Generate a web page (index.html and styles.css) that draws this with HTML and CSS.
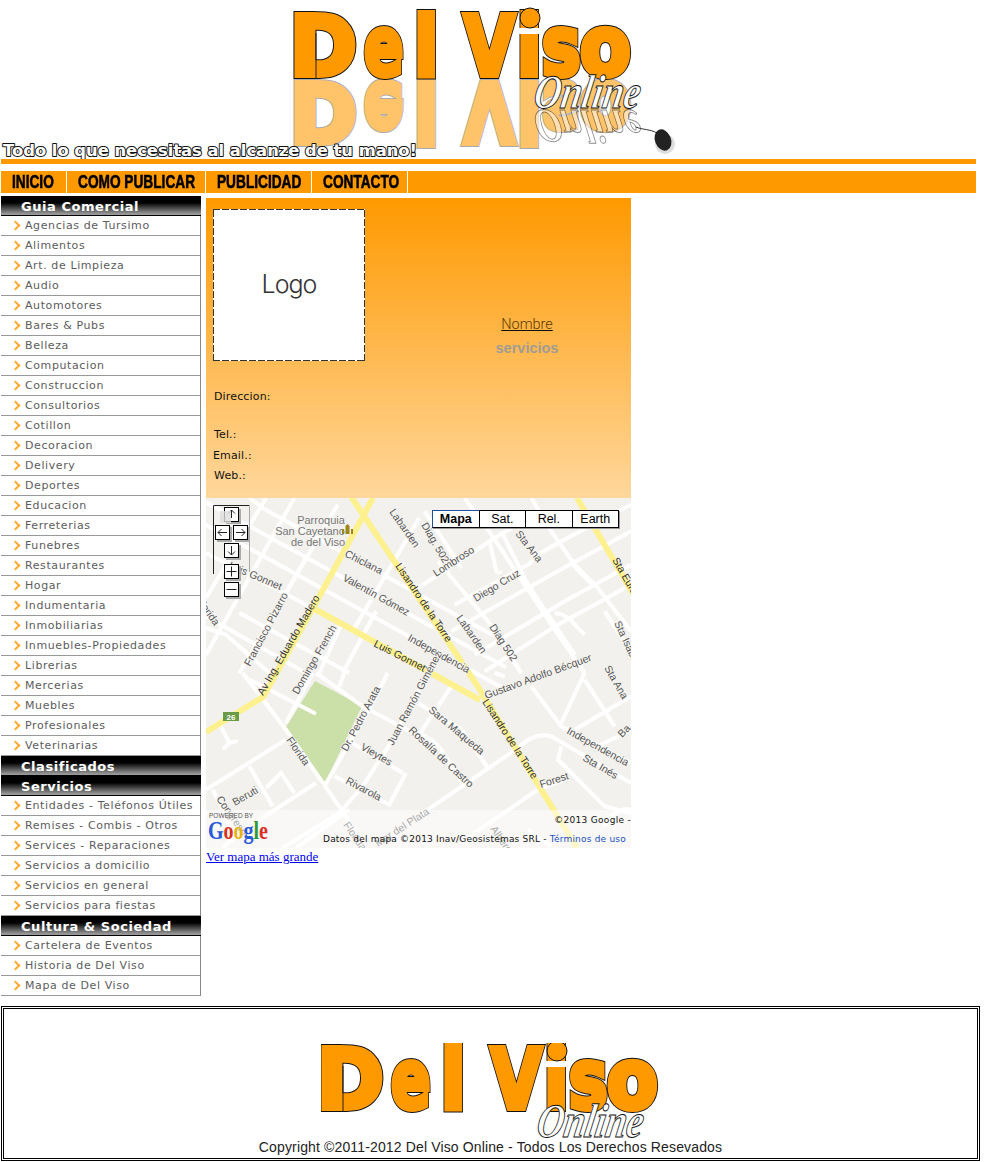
FILE: index.html
```html
<!DOCTYPE html>
<html lang="es">
<head>
<meta charset="utf-8">
<title>Del Viso Online</title>
<link rel="stylesheet" href="styles.css">
</head>
<body>
<header class="masthead">
<svg class="masthead-art" width="976" height="159" viewBox="0 0 976 159" role="img" aria-label="Del Viso Online">
  <defs>
    <linearGradient id="fade" gradientUnits="userSpaceOnUse" x1="0" y1="78" x2="0" y2="12">
      <stop offset="0" stop-color="#fff"/>
      <stop offset="1" stop-color="#ffc46a"/>
    </linearGradient>
    <linearGradient id="fadeline" gradientUnits="userSpaceOnUse" x1="0" y1="78" x2="0" y2="12">
      <stop offset="0" stop-color="#fff"/>
      <stop offset="1" stop-color="#aaa"/>
    </linearGradient>
    <g id="delviso" class="letters">
      <text transform="translate(290 75) scale(.98 1)">D</text>
      <text transform="translate(364 75) scale(.71 1)">e</text>
      <text transform="translate(414 75) scale(.87 1)">l</text>
      <text transform="translate(464 75) scale(.8 1)">V</text>
      <text transform="translate(517 75) scale(.87 1)">i</text>
      <text transform="translate(542 75) scale(.79 1)">s</text>
      <text transform="translate(580 75) scale(.9 1)">o</text>
    </g>
    <g id="idot">
      <path class="i-gap" d="M518 31H543"/>
      <circle class="i-dot" cx="530" cy="18" r="10"/>
    </g>
    <g id="online">
      <text class="online-word" transform="skewX(-10) scale(.78 1)">Online</text>
    </g>
  </defs>
  <use href="#delviso" transform="translate(0 158) scale(1 -1)" class="logo-mirror-line"/>
  <use href="#delviso" transform="translate(0 158) scale(1 -1)" class="logo-mirror"/>
  <use href="#online" transform="translate(532 110) scale(1 -1)" class="online-mirror"/>
  <use href="#delviso" class="logo-outline"/>
  <use href="#delviso" class="logo-fill"/>
  <use href="#idot"/>
  <path class="d-stem" d="M316 33V78"/>
  <use href="#online" transform="translate(532 108)"/>
  <path class="cord" d="M636 127c7 3 14 2 21 6"/>
  <ellipse class="mouse-shadow" cx="665" cy="144" rx="10" ry="10"/>
  <ellipse class="mouse" cx="663" cy="140" rx="8" ry="11" transform="rotate(-22 663 140)"/>
  <text class="tagline" x="3" y="156" textLength="414" lengthAdjust="spacingAndGlyphs">Todo lo que necesitas al alcanze de tu mano!</text>
</svg>
</header>
<div class="rule"></div>
<nav class="topnav">
  <a class="topnav-item" href="#"><span class="topnav-label">INICIO</span></a>
  <a class="topnav-item" href="#"><span class="topnav-label">COMO PUBLICAR</span></a>
  <a class="topnav-item" href="#"><span class="topnav-label">PUBLICIDAD</span></a>
  <a class="topnav-item" href="#"><span class="topnav-label">CONTACTO</span></a>
</nav>
<div class="columns">
  <aside class="sidebar">
    <h2 class="side-head">Guia Comercial</h2>
    <ul class="side-list">
      <li>Agencias de Tursimo</li><li>Alimentos</li><li>Art. de Limpieza</li><li>Audio</li><li>Automotores</li><li>Bares &amp; Pubs</li><li>Belleza</li><li>Computacion</li><li>Construccion</li><li>Consultorios</li><li>Cotillon</li><li>Decoracion</li><li>Delivery</li><li>Deportes</li><li>Educacion</li><li>Ferreterias</li><li>Funebres</li><li>Restaurantes</li><li>Hogar</li><li>Indumentaria</li><li>Inmobiliarias</li><li>Inmuebles-Propiedades</li><li>Librerias</li><li>Mercerias</li><li>Muebles</li><li>Profesionales</li><li>Veterinarias</li>
    </ul>
    <h2 class="side-head">Clasificados</h2>
    <h2 class="side-head">Servicios</h2>
    <ul class="side-list">
      <li>Entidades - Teléfonos Útiles</li><li>Remises - Combis - Otros</li><li>Services - Reparaciones</li><li>Servicios a domicilio</li><li>Servicios en general</li><li>Servicios para fiestas</li>
    </ul>
    <h2 class="side-head">Cultura &amp; Sociedad</h2>
    <ul class="side-list">
      <li>Cartelera de Eventos</li><li>Historia de Del Viso</li><li>Mapa de Del Viso</li>
    </ul>
  </aside>
  <main class="content">
    <section class="card">
      <div class="card-left">
        <div class="logo-box">Logo</div>
        <p class="field field-address">Direccion:</p>
        <p class="field field-tel">Tel.:</p>
        <p class="field field-mail">Email.:</p>
        <p class="field">Web.:</p>
      </div>
      <div class="card-right">
        <a class="biz-name" href="#">Nombre</a>
        <p class="biz-services">servicios</p>
      </div>
    </section>
    <div class="map">
      <svg class="map-art" width="425" height="350" viewBox="206 498 425 350">
        <rect x="206" y="498" width="425" height="350" fill="#f2f1ed"/>
        <g class="roads" transform="translate(206 498) scale(.3333)">
          <path d="M160 25L640 290L900 433M0 13L640 365L900 508M0 80L640 432L900 575M0 165L320 330M100 345L430 525M0 355L300 525"/>
          <path d="M265 0L0 470M395 20L100 525M300 180L190 370M510 340L410 525M410 370L340 525M640 60L440 400M180 0L0 300"/>
          <path d="M0 390L60 410L190 525M170 30L130 0"/>
        </g>
        <g class="roads" transform="translate(418 498) scale(.3333)">
          <path d="M0 270L215 130L330 60M110 320L330 200Q345 190 350 175L420 135L639 20M100 400L400 230L639 100M170 470L440 310L639 200M200 520L420 380L639 260"/>
          <path d="M140 0L220 110L400 380L500 525M340 0L400 100L470 200L540 270L639 400M60 190L210 370L310 525M250 100L330 260L470 470M20 40L130 210M560 340L639 460"/>
          <path d="M215 130L235 220Q250 225 245 220M410 345Q450 350 475 385L500 410M465 200Q480 220 530 265"/>
        </g>
        <polygon class="park" points="315,681 362,706 323,787 286,727"/>
        <g class="roads" transform="translate(206 673) scale(.3333)">
          <path d="M110 0L240 170L420 430L470 525M320 0L240 150M130 20L190 50M330 0L470 100L639 190M415 0L400 40M545 0L500 90L355 340M639 50L560 200L470 340L400 420L230 525"/>
          <path d="M0 350L240 200M330 330L100 480L50 525M130 280L200 400M180 345L225 300L265 360M20 350L90 490"/>
          <path d="M385 310L550 395L600 300M439 210L590 300M270 525L430 410"/>
          <path class="road-stub" d="M190 50L325 120M45 160L70 210L55 225M70 210L90 205"/>
        </g>
        <g class="roads" transform="translate(418 673) scale(.3333)">
          <path d="M0 430L300 225Q350 175 400 190L639 330M140 500L360 350L440 320M430 220L420 260L560 400L639 420M100 40L0 190M0 90L130 170L210 285M0 180Q40 195 70 230L135 335"/>
          <path d="M340 40L430 160L639 270M500 0L430 150M470 170L639 70M500 20L590 160M540 220L639 170M230 0L260 10M560 460Q590 400 639 410M330 470L400 520"/>
        </g>
        <g class="highways">
          <path d="M373 498L313 608L263 697L206 732"/>
          <path d="M350 495L477 685L577 848"/>
          <path d="M313 608L480 700"/>
          <path d="M577 498L640 605"/>
        </g>
        <rect class="shield" x="223" y="712" width="16" height="9"/>
        <text class="shield-text" x="231" y="720">26</text>
        <g class="street-labels">
          <text class="poi" x="321" y="524" text-anchor="middle">Parroquia</text>
          <text class="poi" x="310" y="535" text-anchor="middle">San Cayetano</text>
          <text class="poi" x="318" y="546" text-anchor="middle">de del Viso</text>
          <text transform="translate(344 556) rotate(27)">Chiclana</text>
          <text transform="translate(342 580) rotate(29)">Valentín Gómez</text>
          <text transform="translate(389 512) rotate(55)">Labarden</text>
          <text transform="translate(421 525) rotate(60)">Diag. 502</text>
          <text transform="translate(436 577) rotate(-33)">Lombroso</text>
          <text transform="translate(515 534) rotate(52)">Sta Ana</text>
          <text transform="translate(476 602) rotate(-31)">Diego Cruz</text>
          <text transform="translate(456 618) rotate(55)">Labarden</text>
          <text transform="translate(489 627) rotate(57)">Diag 502</text>
          <text transform="translate(407 640) rotate(29)">Independencia</text>
          <text transform="translate(228 568) rotate(23)">Luis Gonnet</text>
          <text transform="translate(250 667) rotate(-62)">Francisco Pizarro</text>
          <text transform="translate(298 695) rotate(-60)">Domingo French</text>
          <text transform="translate(196 600) rotate(55)">Florida</text>
          <text transform="translate(286 740) rotate(55)">Florida</text>
          <text transform="translate(347 752) rotate(-62)">Dr. Pedro Arata</text>
          <text transform="translate(393 746) rotate(-62)">Juan Ramón Giménez</text>
          <text transform="translate(428 711) rotate(40)">Sara Maqueda</text>
          <text transform="translate(408 731) rotate(43)">Rosalía de Castro</text>
          <text transform="translate(360 749) rotate(30)">Vieytes</text>
          <text transform="translate(345 783) rotate(28)">Rivarola</text>
          <text transform="translate(235 806) rotate(-30)">Beruti</text>
          <text transform="translate(216 799) rotate(55)">Congreso</text>
          <text transform="translate(486 699) rotate(-20)">Gustavo Adolfo Bécquer</text>
          <text transform="translate(566 733) rotate(29)">Independencia</text>
          <text transform="translate(582 760) rotate(30)">Sta Inés</text>
          <text transform="translate(541 788) rotate(-18)">Forest</text>
          <text transform="translate(614 623) rotate(65)">Sta Isabel</text>
          <text transform="translate(604 668) rotate(60)">Sta Ana</text>
          <text transform="translate(622 738) rotate(-45)">Ba</text>
        </g>
        <g class="road-labels">
          <text transform="translate(395 566) rotate(56)">Lisandro de la Torre</text>
          <text transform="translate(482 702) rotate(57)">Lisandro de la Torre</text>
          <text transform="translate(373 646) rotate(27)">Luis Gonnet</text>
          <text transform="translate(263 696) rotate(-60)">Av Ing. Eduardo Madero</text>
          <text transform="translate(612 560) rotate(60)">Sta Eufemia</text>
        </g>
        <path class="church" d="M342 534v-5h2v5zM345.500 534v-8l2-2 2 2v8zM351 534v-5h2v5z"/>
        <rect class="attrib-band" x="206" y="810" width="425" height="38"/>
        <text class="faded" transform="translate(343 825) rotate(55)">Florida</text>
        <text class="faded" transform="translate(378 847) rotate(-33)">Mar del Plata</text>
        <text class="faded" transform="translate(490 829) rotate(55)">Alberdi</text>
        <text class="powered" x="209" y="818">POWERED BY</text>
        <text class="google" x="208" y="839" textLength="60" lengthAdjust="spacingAndGlyphs"><tspan fill="#2a5bd7">G</tspan><tspan fill="#d8321f">o</tspan><tspan fill="#e5b414">o</tspan><tspan fill="#2a5bd7">g</tspan><tspan fill="#2f9b36">l</tspan><tspan fill="#d8321f">e</tspan></text>
        <text class="attrib" x="631" y="823" text-anchor="end">©2013 Google -</text>
        <text class="attrib" x="323" y="842" textLength="303">Datos del mapa ©2013 Inav/Geosistemas SRL - <tspan fill="#1a4fc0">Términos de uso</tspan></text>
        <g class="map-nav">
          <path class="nav-frame-dark" d="M213.500 574V505.500H249"/>
          <path class="nav-frame-light" d="M249.500 505V572"/>
          <g class="nav-btns">
            <rect x="224.500" y="507.500" width="14" height="14"/>
            <rect x="215.500" y="525.500" width="14" height="14"/>
            <rect x="233.500" y="525.500" width="14" height="14"/>
            <rect x="224.500" y="543.500" width="14" height="14"/>
            <rect x="224.500" y="564.500" width="14" height="14"/>
            <rect x="224.500" y="582.500" width="14" height="14"/>
          </g>
          <path class="nav-glyphs" d="M231.500 518V510M228 513.500L231.500 510L235 513.500M227 532.500H218M221.500 529L218 532.500L221.500 536M236 532.500H245M241.500 529L245 532.500L241.500 536M231.500 546V555M228 551.500L231.500 555L235 551.500M226.500 571.500H236.500M231.500 566.500V576.500M226.500 589.500H236.500"/>
          <rect class="nav-tile" x="220" y="511" width="11" height="12"/>
        </g>
      </svg>
      <div class="map-types">
        <span class="map-type map-type-on">Mapa</span>
        <span class="map-type">Sat.</span>
        <span class="map-type">Rel.</span>
        <span class="map-type">Earth</span>
      </div>
    </div>
    <a class="map-link" href="#">Ver mapa más grande</a>
  </main>
</div>
<footer class="footer">
  <svg class="footer-art" width="340" height="96" viewBox="321 1043 340 96" role="img" aria-label="Del Viso Online">
    <use href="#delviso" transform="translate(27 1033)" class="logo-outline"/>
    <use href="#delviso" transform="translate(27 1033)" class="logo-fill"/>
    <use href="#idot" transform="translate(27 1033)"/>
    <path class="d-stem" d="M343 1066V1111"/>
    <use href="#online" transform="translate(535 1137)"/>
  </svg>
  <p class="copyright">Copyright ©2011-2012 Del Viso Online - Todos Los Derechos Resevados</p>
</footer>
</body>
</html>
```
FILE: styles.css
```css
* { box-sizing: border-box; }
html, body { margin: 0; padding: 0; background: #fff; }
body { width: 985px; font-family: "DejaVu Sans", sans-serif; }

.masthead { height: 159px; }
.masthead-art { display: block; }
.letters text { font: 700 82px "DejaVu Sans", sans-serif; }
.logo-outline { fill: #111; stroke: #111; stroke-width: 8px; stroke-linejoin: miter; stroke-miterlimit: 3; }
.logo-fill { fill: #ff9900; stroke: #ff9900; stroke-width: 6px; stroke-linejoin: miter; stroke-miterlimit: 3; }
.logo-mirror-line { fill: url(#fadeline); stroke: url(#fadeline); stroke-width: 8px; }
.logo-mirror { fill: url(#fade); stroke: url(#fade); stroke-width: 6px; }
.d-stem { fill: none; stroke: #222; stroke-width: 1px; }
.i-gap { fill: none; stroke: #fff; stroke-width: 6px; }
.i-dot { fill: #ff9900; stroke: #111; stroke-width: 1px; }
.online-word { font: italic 700 48px "Liberation Serif", serif; fill: #fff; stroke: #111; stroke-width: 1px; }
.online-mirror { opacity: .5; }
.cord { fill: none; stroke: #333; stroke-width: 1px; }
.mouse { fill: #222; }
.mouse-shadow { fill: #ddd; }
.tagline { font: 700 16.500px "DejaVu Sans", sans-serif; fill: #fff; stroke: #111; stroke-width: 2px; paint-order: stroke; stroke-linejoin: round; }

.rule { height: 5px; margin-left: 1px; width: 975px; background: #ff9900; }

.topnav { display: grid; grid-template-columns: 66px 139px 106px 96px; height: 22px; width: 975px; margin: 7px 0 0 1px; background: #ff9900; }
.topnav-item { display: flex; align-items: center; padding-left: 11px; border-right: 1px solid #fff; color: #000; text-decoration: none; font: 700 19px "Liberation Sans", sans-serif; -webkit-text-stroke: .6px #000; overflow: hidden; white-space: nowrap; }
.topnav-label { display: inline-block; transform: scaleX(.72); transform-origin: left center; }

.columns { display: flex; align-items: flex-start; height: 810px; margin-top: 3px; }
.sidebar { width: 200px; margin-left: 1px; flex: none; }
.side-head { display: flex; align-items: center; height: 20px; margin: 0; padding: 2px 0 0 20px; border-bottom: 1px solid #000; background: linear-gradient(#000 0, #000 35%, #999 95%); color: #fff; font: 700 13px "DejaVu Sans", sans-serif; letter-spacing: .55px; }
.side-list { margin: 0; padding: 0; list-style: none; border-right: 1px solid #888; }
.side-list li { display: flex; align-items: center; gap: 6px; height: 20px; padding: 0 0 1px 11px; border-bottom: 1px solid #999; color: #5c5c5c; font: 400 11px "DejaVu Sans", sans-serif; letter-spacing: .6px; white-space: nowrap; }
.side-list li::before { content: ""; flex: none; width: 5px; height: 5px; border-top: 2px solid #ffab33; border-right: 2px solid #ffab33; transform: rotate(45deg); }

.content { width: 425px; margin: 2px 0 0 5px; flex: none; }
.card { display: flex; height: 300px; background: linear-gradient(#ff9900, #ffd79c); }
.card-left { width: 217px; padding: 11px 0 0 7px; }
.logo-box { display: flex; align-items: center; justify-content: center; width: 152px; height: 152px; margin-bottom: 28px; padding-bottom: 2px; background-color: #fff; background-image: repeating-linear-gradient(90deg, #333 0 7px, transparent 7px 9px), repeating-linear-gradient(90deg, #333 0 7px, transparent 7px 9px), repeating-linear-gradient(0deg, #333 0 7px, transparent 7px 9px), repeating-linear-gradient(0deg, #333 0 7px, transparent 7px 9px); background-size: 100% 1px, 100% 1px, 1px 100%, 1px 100%; background-position: 0 0, 0 100%, 0 0, 100% 0; background-repeat: no-repeat; color: #333; font: 300 25px Inter, "Liberation Sans", sans-serif; letter-spacing: -1px; }
.field { margin: 0 0 0 1px; height: 20px; color: #111; font: 400 11px/15px "DejaVu Sans", sans-serif; letter-spacing: .15px; }
.field-address { height: 38px; }
.field-tel { height: 21px; }
.field-mail { height: 20px; margin-left: 0; }
.card-right { flex: 1; padding-top: 116px; text-align: center; }
.biz-name { color: #5c3a00; font: 300 14.500px Roboto, "Liberation Sans", sans-serif; text-decoration: underline; text-decoration-color: #111; }
.biz-services { margin: 7px 0 0; color: #a09c94; font: 700 14.500px "Liberation Sans", sans-serif; }

.map { position: relative; width: 425px; height: 350px; overflow: hidden; }
.map-art { display: block; }
.roads path { fill: none; stroke: #fff; stroke-width: 12px; }
.roads .road-stub { stroke-linecap: round; }
.park { fill: #cbdfa9; }
.highways path { fill: none; stroke: #fdf18f; stroke-width: 6px; }
.shield { fill: #6a9c47; }
.shield-text { fill: #fff; font: 700 8px "Liberation Sans", sans-serif; text-anchor: middle; }
.street-labels text { fill: #555; font: 400 10.500px "Liberation Sans", sans-serif; stroke: #f5f4f1; stroke-width: 1.500px; paint-order: stroke; }
.street-labels .poi { fill: #777; font-size: 11px; }
.road-labels text { fill: #333; font: 400 10.500px "Liberation Sans", sans-serif; }
.church { fill: #a08414; }
.attrib-band { fill: #fff; fill-opacity: .5; }
.faded { fill: #aaa; font: 400 10.500px "Liberation Sans", sans-serif; }
.powered { fill: #555; font: 400 6.500px "Liberation Sans", sans-serif; }
.google { font: 700 26px "Liberation Serif", serif; }
.attrib { fill: #111; font: 400 9px "DejaVu Sans", sans-serif; letter-spacing: .3px; }
.nav-frame-dark { fill: none; stroke: #222; }
.nav-frame-light { fill: none; stroke: #aaa; }
.nav-tile { fill: #ddd; fill-opacity: .8; }
.nav-btns rect { fill: #fff; stroke: #000; filter: drop-shadow(2px 2px 0 #aaa); }
.nav-glyphs { fill: none; stroke: #222; }

.map-types { position: absolute; top: 12px; left: 226px; display: flex; box-shadow: 1px 1px 0 #999; }
.map-type { display: flex; align-items: center; justify-content: center; width: 47.500px; height: 18px; margin-left: -1px; border: 1px solid #000; background: #fff; color: #000; font: 400 12.500px "Liberation Sans", sans-serif; }
.map-type:first-child { margin-left: 0; }
.map-type-on { border-color: #1f4e9c #000 #000 #1f4e9c; font-weight: 700; }

.map-link { display: block; color: #0000ee; font: 400 13px/17px "Liberation Serif", serif; }

.footer { display: flex; flex-direction: column; align-items: center; width: 979px; height: 155px; margin-left: 1px; padding-top: 34px; border: 3px double #000; }
.footer-art { display: block; flex: none; }
.copyright { margin: 0; color: #222; font: 400 14px/16px "Liberation Sans", sans-serif; letter-spacing: .14px; }
```
